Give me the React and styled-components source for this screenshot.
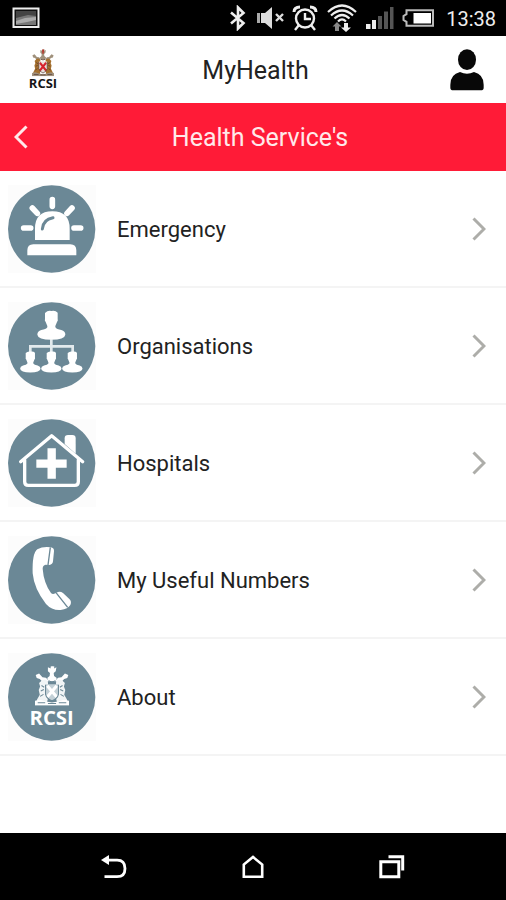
import styled, { createGlobalStyle } from "styled-components";

const slate = "#6b8896";

const services = [
  { id: "emergency", label: "Emergency", Icon: SirenIcon },
  { id: "organisations", label: "Organisations", Icon: OrganisationIcon },
  { id: "hospitals", label: "Hospitals", Icon: HospitalIcon },
  { id: "numbers", label: "My Useful Numbers", Icon: PhoneIcon },
  { id: "about", label: "About", Icon: AboutIcon },
];

const App = () => {
  return (
    <Screen>
      <GlobalStyle />
      <StatusBar />
      <Header>
        <Logo />
        <Title>MyHealth</Title>
        <ProfileButton aria-label="Profile">
          <UserIcon />
        </ProfileButton>
      </Header>
      <SectionBar>
        <BackButton aria-label="Back">
          <Chevron width="14" height="24" viewBox="0 0 14 24" $color="#ffe9ea">
            <path d="M12.5 1.5 2 12l10.5 10.5" />
          </Chevron>
        </BackButton>
        <SectionTitle>Health Service's</SectionTitle>
      </SectionBar>
      <Main>
        <ServiceList>
          {services.map(({ id, label, Icon }) => (
            <li key={id}>
              <ServiceLink href={`#${id}`}>
                <IconBox>
                  <Icon />
                </IconBox>
                <ServiceName>{label}</ServiceName>
                <Chevron width="14" height="24" viewBox="0 0 14 24" $color="#adada9">
                  <path d="M1.5 1.5 12 12 1.5 22.5" />
                </Chevron>
              </ServiceLink>
            </li>
          ))}
        </ServiceList>
      </Main>
      <NavBar />
    </Screen>
  );
};

export default App;

function StatusBar() {
  return (
    <Status>
      <svg width="28" height="22" viewBox="0 0 28 22">
        <rect x="1.5" y="1.5" width="25" height="18.5" fill="#111" stroke="#eee" strokeWidth="2" />
        <path d="M4 4h20v14H4z" fill="#777" />
        <path d="M4 4h20v5L16 8 4 11z" fill="#444" />
        <path d="M4 14l9-3 11-1v3l-9 2-11 2z" fill="#aaa" />
      </svg>
      <StatusIcons>
        <svg width="20" height="26" viewBox="0 0 20 26" fill="none" stroke="#eee" strokeWidth="2.6">
          <path d="M3 7.5 15.5 18 10 23.5V2.5L15.5 8 3 18.5" />
        </svg>
        <svg width="28" height="24" viewBox="0 0 28 24">
          <path d="M1 7h3v10H1z" fill="#aaa" />
          <path d="M5 7h4l7-6v22l-7-6H5z" fill="#ddd" />
          <path d="m20 8 7 7m0-7-7 7" stroke="#ddd" strokeWidth="2.4" />
        </svg>
        <svg width="26" height="26" viewBox="0 0 26 26" fill="none" stroke="#eee" strokeWidth="2.4">
          <circle cx="13" cy="13.5" r="9" />
          <path d="M13 8v6h6M7 20l-4 5M19 20l4 5" />
          <path d="M2 7Q2 2 8 2M24 7q0-5-6-5" strokeWidth="3" />
        </svg>
        <svg width="32" height="28" viewBox="0 0 32 28" fill="none" stroke="#eee" strokeWidth="2.2">
          <path d="M2 8Q16-5 30 8M5 11.5q11-10 22 0M8.5 14.5q7.5-7 15 0M12 17.5q4-4 8 0" />
          <path d="M11 18l4.5 4.500H13V27H9v-4.500H6.500z" fill="#888" stroke="none" />
          <path d="M20 28l-5-4.500h3V19h4v4.500h3z" fill="#eee" stroke="none" />
        </svg>
        <svg width="28" height="22" viewBox="0 0 28 22">
          <path d="M0 17h4.500v5H0zM6 13h4v9H6z" fill="#eee" />
          <path d="M12 9h4v13h-4zM18 4.500h4V22h-4zM24 0h3.500v22H24z" fill="#555" />
        </svg>
        <svg width="32" height="18" viewBox="0 0 32 18">
          <path d="M4.500 1.200H31v15.600H4.500v-4L1.500 11V7l3-1.800z" fill="none" stroke="#bbb" strokeWidth="2" />
          <path d="M11.500 4H29v10.500H11.500z" fill="#fff" />
        </svg>
        <Clock>13:38</Clock>
      </StatusIcons>
    </Status>
  );
}

function NavBar() {
  return (
    <Nav>
      <NavButton aria-label="Go back">
        <svg width="26" height="24" viewBox="0 0 26 24">
          <path d="M3.500 21.700H16q8 0 8-8.300T16 5.200H6" fill="none" stroke="#fff" strokeWidth="2.800" />
          <path d="M0 5 8 0v10z" fill="#fff" />
        </svg>
      </NavButton>
      <NavButton aria-label="Home">
        <svg width="22" height="24" viewBox="0 0 22 24">
          <path d="M1.800 21.700V9.500L11 2l9.200 7.500v12.200z" fill="none" stroke="#fff" strokeWidth="2.600" />
        </svg>
      </NavButton>
      <NavButton aria-label="Recent apps">
        <svg width="26" height="24" viewBox="0 0 26 24" fill="none" stroke="#fff">
          <path d="M1.800 6.800h18v15h-18z" strokeWidth="3" />
          <path d="M9.500 1.700h14.200V15.500" strokeWidth="3" />
        </svg>
      </NavButton>
    </Nav>
  );
}

// Coat of arms: helm and plume, two supporters, shield and base
function Crest({ main, accent, plume, shield, detail, dark }) {
  return (
    <>
      <path d="M38 4l8 4 2-6h9l-1 6 7-4-2 12-6 5 1 9 8 6-4 10H40l-4-10 7-6 1-9-6-5z" fill={main} />
      <path d="M46 2h9l-2 18h-6z" fill={plume} />
      <path d="M2 27l10-4 10 11 10 1 8 8-6 8-12-4-8-8-9-3z" fill={main} />
      <path d="M98 27l-10-4-10 11-10 1-8 8 6 8 12-4 8-8 9-3z" fill={main} />
      <path d="M20 43q12-6 18 5l2 40-5 21H4l2-10 8-14-3-14 4-10-3-10z" fill={accent} />
      <path d="M80 43q-12-6-18 5l-2 40 5 21h31l-2-10-8-14 3-14-4-10 3-10z" fill={accent} />
      <path d="M31 54h38v30q-3 13-19 19-16-6-19-19z" fill={shield} />
      <path d="M36 59l28 33M64 59 36 92" stroke={detail} strokeWidth="9" />
      <path d="M0 103l15-3 17 5 18 3 18-3 17-5 15 3v14H0z" fill={main} />
      <path
        d="M40 44q10 6 20 0M19 58l8 5M17 74l9-4M15 90l10-6M81 58l-8 5M83 74l-9-4M85 90l-10-6M8 109h22M38 111h24M70 109h22M31 56v28q3 13 19 19M69 56v28q-3 13-19 19"
        stroke={dark}
        strokeWidth="3"
        fill="none"
      />
    </>
  );
}

function Logo() {
  return (
    <svg width="32" height="42" viewBox="0 0 96 126" role="img" aria-label="RCSI">
      <svg x="15" y="0" width="66" height="82" viewBox="0 0 100 117" preserveAspectRatio="none">
        <Crest
          main="#a0917c"
          accent="#a5702e"
          plume="#b5352a"
          shield="#eadfd9"
          detail="#d6222c"
          dark="#54372d"
        />
      </svg>
      <LogoText x="48" y="116" $size={39}>
        RCSI
      </LogoText>
    </svg>
  );
}

function UserIcon() {
  return (
    <svg width="34" height="42" viewBox="0 0 102 124" fill="#080808">
      <ellipse cx="51" cy="31" rx="27" ry="31" />
      <path d="M30 68q21 10 42 0 29 7 29 38v9q0 8-9 8H10q-9 0-9-8v-9q0-31 29-38z" />
    </svg>
  );
}

function RoundIcon({ children }) {
  return (
    <svg width="88" height="88" viewBox="0 0 264 264" aria-hidden="true">
      <circle cx="131" cy="132" r="131" fill={slate} />
      {children}
    </svg>
  );
}

function SirenIcon() {
  return (
    <RoundIcon>
      <path d="M81 165v-34q0-52 52-52t52 52v34zM58 211v-15q0-18 18-18h111q18 0 18 18v15z" fill="#fff" />
      <path
        d="M133 44v20M47 129h21M198 129h20M73 69l15 16M192 69l-15 16"
        stroke="#fff"
        strokeWidth="17"
        strokeLinecap="round"
      />
      <path d="M103 132q2-29 32-34" fill="none" stroke={slate} strokeWidth="9" strokeLinecap="round" />
    </RoundIcon>
  );
}

function Person({ x, y, size }) {
  return (
    <g transform={`translate(${x} ${y}) scale(${size})`} fill="#fff">
      <path d="M-19 7Q-10-2 0 1 12-2 19 6V25Q21 29 17 34L12 46V62H-12V46L-17 34Q-21 29-19 25z" />
      <path d="M-12 50Q0 58 12 50 16 56 30 58 42 62 42 72 40 87 0 87-40 87-42 72-42 62-30 58-16 56-12 50z" />
    </g>
  );
}

function OrganisationIcon() {
  return (
    <RoundIcon>
      <path d="M130 112v38M67 150v-17h127v17" fill="none" stroke="#e3eaed" strokeWidth="8" />
      <Person x={130} y={26} size={1} />
      <Person x={67} y={148} size={0.73} />
      <Person x={130} y={148} size={0.73} />
      <Person x={193} y={148} size={0.73} />
    </RoundIcon>
  );
}

function HospitalIcon() {
  return (
    <RoundIcon>
      <path d="M170 75V58q0-10 10-10h13q10 0 10 10v46z" fill="#fff" />
      <path
        d="M50 122v66q0 11 11 11h139q11 0 11-11v-66M38 128l93-78 93 78"
        fill="none"
        stroke="#fff"
        strokeWidth="10"
        strokeLinecap="round"
        strokeLinejoin="round"
      />
      <path d="M131 88v91M85 134h91" stroke="#fff" strokeWidth="25" />
    </RoundIcon>
  );
}

function PhoneIcon() {
  return (
    <RoundIcon>
      <path
        d="M88 40Q104 31 128 34 139 36 138 46L135 76Q134 86 124 87L113 86Q104 88 104 98 107 140 129 171 134 177 142 172L150 168Q158 166 165 171L184 189Q192 197 187 207 180 219 158 222 132 224 114 204 78 158 74 112 72 52 88 40z"
        fill="#fff"
      />
      <path d="M127 34l-7 53M144 170l35 44" stroke={slate} strokeWidth="4" fill="none" />
    </RoundIcon>
  );
}

function AboutIcon() {
  return (
    <RoundIcon>
      <svg x="81" y="38" width="102" height="120" viewBox="0 0 100 117">
        <Crest main="#fff" accent="#f1f5f6" plume="#fff" shield="#c3d0d6" detail="#fff" dark={slate} />
      </svg>
      <LogoText x="131" y="216" $size={61} $light>
        RCSI
      </LogoText>
    </RoundIcon>
  );
}

const GlobalStyle = createGlobalStyle`
  * {
    box-sizing: border-box;
  }

  body {
    margin: 0;
    background: #fff;
    font-family: Roboto, "Liberation Sans", sans-serif;
    color: #222;
  }

  button {
    border: 0;
    padding: 0;
    background: none;
    cursor: pointer;
  }

  svg {
    display: block;
    flex-shrink: 0;
  }
`;

const Screen = styled.div`
  display: flex;
  flex-direction: column;
  min-height: 100vh;
`;

const Status = styled.div`
  display: flex;
  align-items: center;
  justify-content: space-between;
  height: 36px;
  padding: 0 10px 0 12px;
  background: #000;
`;

const StatusIcons = styled.div`
  display: flex;
  align-items: center;
  gap: 8px;
`;

const Clock = styled.time`
  margin-left: 4px;
  padding-top: 2px;
  font-size: 20px;
  line-height: 24px;
  color: #eee;
`;

const Header = styled.header`
  display: grid;
  grid-template-columns: 1fr auto 1fr;
  align-items: center;
  height: 67px;
  padding: 0 22px 0 27px;
`;

const Title = styled.h1`
  margin: 0;
  padding-top: 2px;
  font-size: 25px;
  font-weight: 400;
  line-height: 32px;
`;

const ProfileButton = styled.button`
  justify-self: end;
`;

const SectionBar = styled.div`
  display: grid;
  grid-template-columns: 1fr auto 1fr;
  align-items: center;
  height: 68px;
  padding-left: 14px;
  background: #ff1b37;
`;

const BackButton = styled.button`
  justify-self: start;
`;

const SectionTitle = styled.h2`
  margin: 0;
  padding-top: 2px;
  font-size: 25px;
  font-weight: 400;
  line-height: 32px;
  color: #ffe9ea;
`;

const Chevron = styled.svg`
  fill: none;
  stroke: ${({ $color }) => $color};
  stroke-width: 3px;
`;

const Main = styled.main`
  flex: 1;
`;

const ServiceList = styled.ul`
  margin: 0;
  padding: 0;
  list-style: none;
`;

const ServiceLink = styled.a`
  display: flex;
  align-items: center;
  height: 117px;
  padding: 0 20px 0 8px;
  border-bottom: 2px solid #f4f4f4;
  color: inherit;
  text-decoration: none;
`;

const IconBox = styled.span`
  background: #fcfcfc;
`;

const ServiceName = styled.span`
  flex: 1;
  margin-left: 21px;
  padding-top: 2px;
  font-size: 22px;
  line-height: 28px;
`;

const LogoText = styled.text`
  font-family: "Open Sans", "Noto Sans", sans-serif;
  font-size: ${({ $size }) => $size}px;
  font-weight: 700;
  text-anchor: middle;
  fill: ${({ $light }) => ($light ? "#fff" : "#161616")};
`;

const Nav = styled.nav`
  display: flex;
  align-items: center;
  justify-content: space-between;
  height: 67px;
  padding: 0 20%;
  background: #000;
`;

const NavButton = styled.button`
  display: flex;
  justify-content: center;
  width: 26px;
`;
